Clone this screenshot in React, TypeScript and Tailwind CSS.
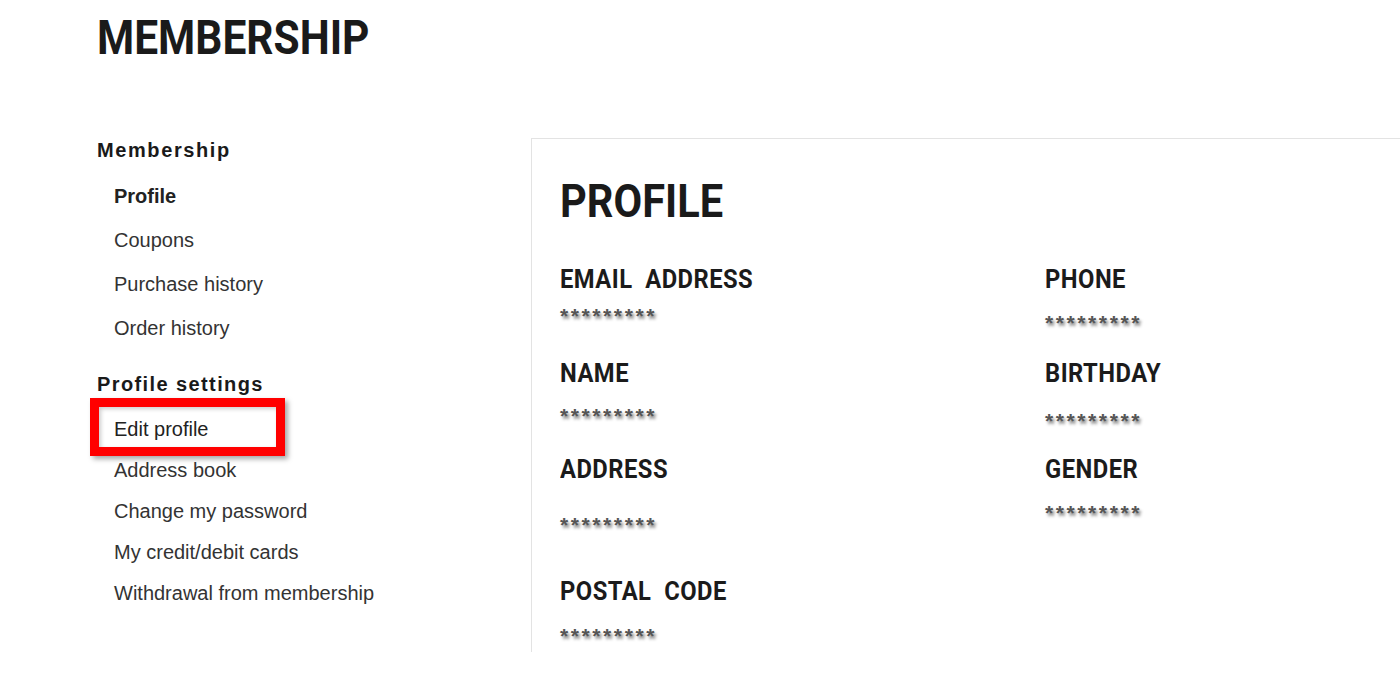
import React from "react";

const din = "font-['Roboto','DejaVu_Sans_Condensed',sans-serif]";

function Stars({ mt }: { mt: string }) {
  return (
    <div
      className={`${mt} h-[20px] text-[21px] leading-[20px] font-bold tracking-[2.6px] text-[#555] font-['Liberation_Sans',Arial,sans-serif] [text-shadow:2px_3px_3px_rgba(0,0,0,0.45)]`}
    >
      *********
    </div>
  );
}

function Label({ children, mt = "" }: { children: React.ReactNode; mt?: string }) {
  return (
    <div className={`${mt} h-[25px]`}>
      <span
        className={`inline-block origin-left scale-x-[0.95] ${din} font-bold text-[25px] leading-[25px] tracking-[0.5px] text-[#1b1b1b] whitespace-pre`}
      >
        {children}
      </span>
    </div>
  );
}

export default function App() {
  const navItem =
    "mt-[20px] text-[20px] leading-[24px] text-[#333] font-['Liberation_Sans',Arial,sans-serif]";
  const navItem2 =
    "mt-[17px] text-[20px] leading-[24px] text-[#333] font-['Liberation_Sans',Arial,sans-serif]";
  return (
    <div className="w-[1400px] h-[685px] bg-white overflow-hidden">
      <div className="pl-[97px] pt-[14px] h-[62px]">
        <h1
          className={`inline-block origin-left scale-x-[0.885] ${din} font-bold text-[48px] leading-[48px] text-[#1a1a1a]`}
        >
          MEMBERSHIP
        </h1>
      </div>
      <div className="flex mt-[76px] pl-[97px]">
        <nav className="w-[434px] shrink-0">
          <div className="text-[20px] leading-[24px] font-bold tracking-[1.6px] text-[#1a1a1a] font-['Liberation_Sans',Arial,sans-serif]">
            Membership
          </div>
          <ul className="pl-[17px]">
            <li className="mt-[22px] text-[20px] leading-[24px] font-bold text-[#222] font-['Liberation_Sans',Arial,sans-serif]">
              Profile
            </li>
            <li className={navItem}>Coupons</li>
            <li className={navItem}>Purchase history</li>
            <li className={navItem}>Order history</li>
          </ul>
          <div className="mt-[32px] text-[20px] leading-[24px] font-bold tracking-[1.4px] text-[#1a1a1a] font-['Liberation_Sans',Arial,sans-serif]">
            Profile settings
          </div>
          <ul className="pl-[17px]">
            <li className="relative mt-[21px] text-[20px] leading-[24px] text-[#222] font-['Liberation_Sans',Arial,sans-serif]">
              Edit profile
              <span className="absolute top-[-19px] left-[-24px] w-[195px] h-[58px] border-[9px] border-[#ff0000] shadow-[3px_3px_5px_rgba(0,0,0,0.35),inset_2px_2px_4px_rgba(0,0,0,0.2)]" />
            </li>
            <li className={navItem2}>Address book</li>
            <li className={navItem2}>Change my password</li>
            <li className={navItem2}>My credit/debit cards</li>
            <li className={navItem2}>Withdrawal from membership</li>
          </ul>
        </nav>
        <section className="flex-1 h-[514px] border-t border-l border-[#e3e3e3] pl-[28px] pt-[38px]">
          <div className="h-[47px]">
            <h2
              className={`inline-block origin-left scale-x-[0.885] ${din} font-bold text-[47px] leading-[47px] text-[#1a1a1a]`}
            >
              PROFILE
            </h2>
          </div>
          <div className="grid grid-cols-[485px_1fr] mt-[43px]">
            <div>
              <Label>EMAIL  ADDRESS</Label>
              <Stars mt="mt-[14px]" />
            </div>
            <div>
              <Label>PHONE</Label>
              <Stars mt="mt-[21px]" />
            </div>
            <div>
              <Label mt="mt-[28px]">NAME</Label>
              <Stars mt="mt-[20px]" />
            </div>
            <div>
              <Label mt="mt-[28px]">BIRTHDAY</Label>
              <Stars mt="mt-[25px]" />
            </div>
            <div>
              <Label mt="mt-[26px]">ADDRESS</Label>
              <Stars mt="mt-[33px]" />
            </div>
            <div>
              <Label mt="mt-[26px]">GENDER</Label>
              <Stars mt="mt-[21px]" />
            </div>
            <div>
              <Label mt="mt-[44px]">POSTAL  CODE</Label>
              <Stars mt="mt-[22px]" />
            </div>
          </div>
        </section>
      </div>
    </div>
  );
}
